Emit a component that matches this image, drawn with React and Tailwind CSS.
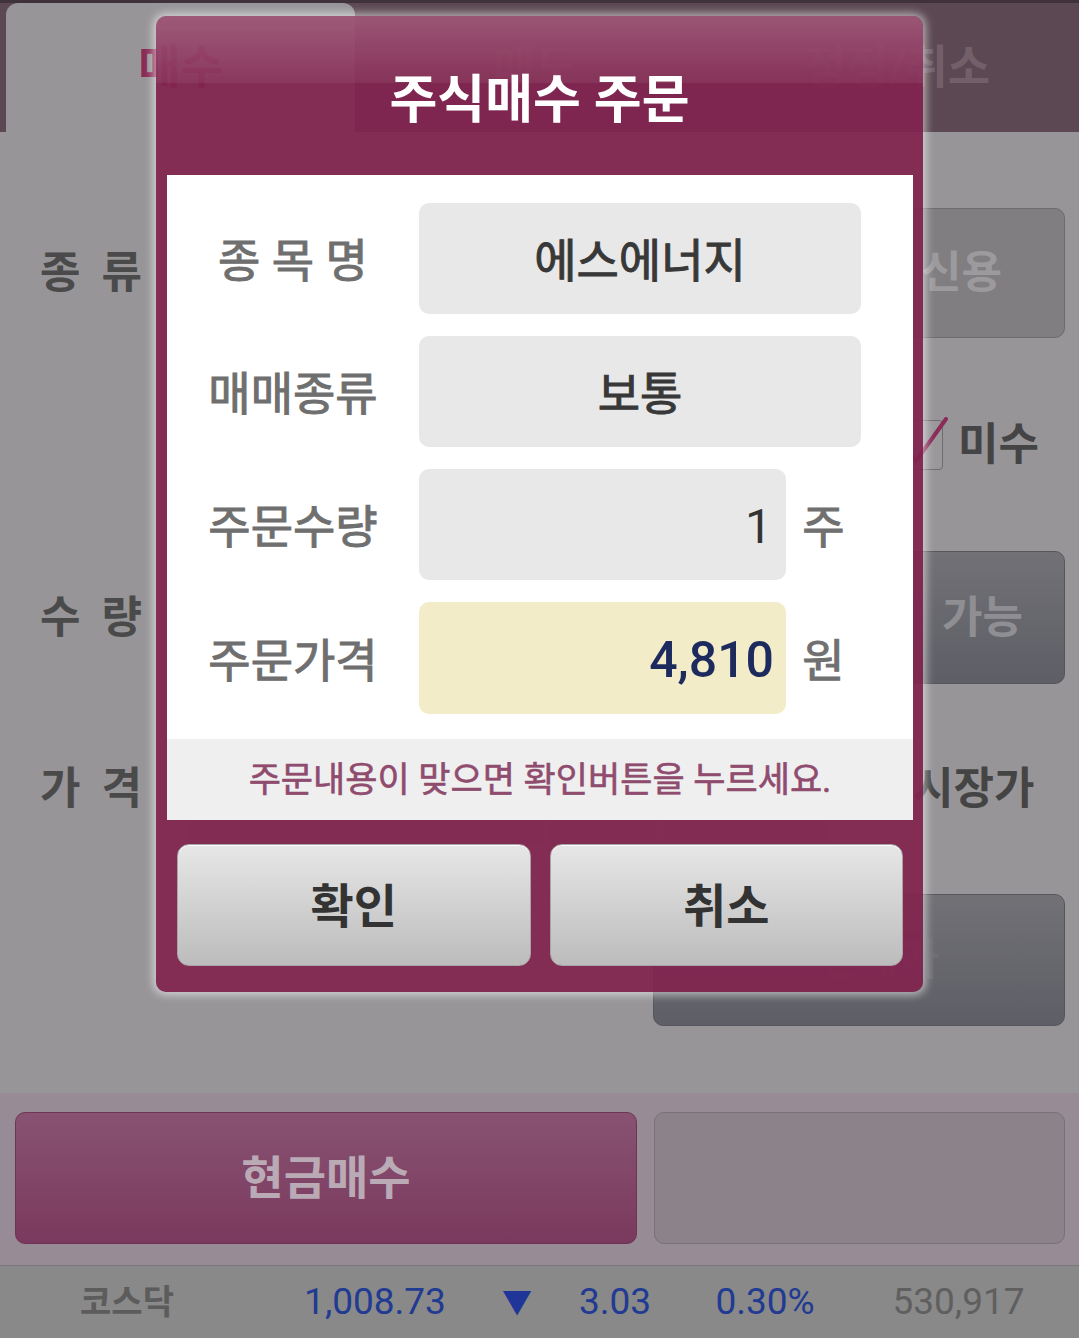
export default function App() {
  return (
    <div className="relative w-[1079px] h-[1338px] overflow-hidden bg-[#979598] font-['Roboto','Noto_Sans_CJK_KR',sans-serif]">
      {/* dimmed order screen behind the dialog */}
      <div className="flex flex-col h-full">
        {/* tabs */}
        <div className="h-[132px] flex items-end pl-[6px] bg-[#5b4852] border-t-[3px] border-[#40323a]">
          <div className="w-[349px] h-full rounded-t-[12px] bg-[#979598] flex items-center justify-center text-[46px] font-bold text-[#8a2b56]">매수</div>
          <div className="w-[360px] h-full flex items-center justify-center text-[46px] font-bold text-[#6e5b66]">매도</div>
          <div className="flex-1 h-full flex items-center justify-center text-[46px] font-bold text-[#725f6a]">정정/취소</div>
        </div>

        <div className="flex-1 flex flex-col">
          <div className="mt-[76px] h-[130px] flex items-center">
            <Label a="종" b="류" />
            <div className="flex-1" />
            <div className="w-[207px] h-full mr-[14px] rounded-[10px] border border-[#6d6b6f] bg-[#807e81] flex items-center justify-center text-[44px] font-bold text-[#9c9a9d]">신용</div>
          </div>

          <div className="h-[213px] flex items-center">
            <div className="flex-1" />
            <div className="w-[50px] h-[50px] rounded-[4px] border border-[#6e6c70] bg-[#9a989b] mr-[15px]">
              <svg width="56" height="56" viewBox="0 0 56 56" className="-mt-[4px]">
                <path d="M10 30 L22 44 L52 2" fill="none" stroke="#8a2b58" strokeWidth="4" strokeLinecap="round" />
              </svg>
            </div>
            <div className="w-[121px] text-[44px] font-bold text-[#444]">미수</div>
          </div>

          <div className="h-[133px] flex items-center">
            <Label a="수" b="량" />
            <div className="flex-1" />
            <div className="w-[165px] h-full mr-[14px] rounded-[10px] border border-[#56565c] bg-linear-to-b from-[#717176] to-[#5e5f66] flex items-center justify-center text-[44px] font-bold text-[#8f8e93]">가능</div>
          </div>

          <div className="h-[210px] flex items-center">
            <Label a="가" b="격" />
            <div className="flex-1 flex gap-[2px] pl-[40px] self-end mb-[48px]">
              <div className="w-[97px] h-[40px] bg-[#8f8d90]" />
              <div className="w-[255px] h-[40px] bg-[#8f8d90]" />
              <div className="w-[112px] h-[40px] bg-[#8f8d90]" />
              <div className="w-[166px] h-[40px] bg-[#8f8d90]" />
            </div>
            <div className="w-[166px] text-[44px] font-bold text-[#444]">시장가</div>
          </div>

          <div className="h-[132px] flex">
            <div className="flex-1" />
            <div className="w-[412px] h-full mr-[14px] rounded-[10px] border border-[#56565c] bg-linear-to-b from-[#717176] to-[#5e5f66] flex items-center justify-center text-[44px] font-bold text-[#6f6e74]">
              <span className="ml-[40px]">전체가</span>
            </div>
          </div>
          <div className="flex-1" />
        </div>

        {/* bottom action band */}
        <div className="h-[172px] bg-[#978c96] flex gap-[17px] pl-[15px] pr-[14px] pt-[19px] pb-[21px]">
          <div className="w-[622px] rounded-[10px] border border-[#6d3454] bg-linear-to-b from-[#885272] to-[#7a395e] flex items-center justify-center text-[46px] font-bold text-[#b9aab5]">현금매수</div>
          <div className="flex-1 rounded-[10px] border border-[#7a7078] bg-[#8c8289]" />
        </div>

        {/* index ticker */}
        <div className="h-[73px] border-t border-[#7c777b] bg-[#898989] grid grid-cols-[254px_242px_42px_154px_146px_1fr] items-center text-center">
          <div className="text-[34px] font-bold text-[#5c5c5c]">코스닥</div>
          <div className="text-[37px] text-[#213a92]">1,008.73</div>
          <div className="text-[30px] text-[#1f3597]">▼</div>
          <div className="text-[37px] text-[#213a92]">3.03</div>
          <div className="text-[37px] text-[#213a92]">0.30%</div>
          <div className="text-[37px] text-[#5f5f5f]">530,917</div>
        </div>
      </div>

      {/* order confirm dialog */}
      <div className="absolute left-[156px] top-[16px] w-[767px] h-[976px] rounded-[10px] bg-[rgba(129,35,79,0.93)] bg-[linear-gradient(to_bottom,rgba(255,255,255,0.22),rgba(255,255,255,0.06)_67px,transparent_67px)] shadow-[0_0_8px_3px_rgba(255,255,255,0.55)] flex flex-col">
        <div className="h-[159px] flex items-center justify-center pt-[10px] text-[52px] font-bold text-white">주식매수 주문</div>

        <div className="ml-[11px] mr-[10px] h-[645px] bg-white flex flex-col">
          <div className="flex-1 flex flex-col gap-[22px] pt-[28px]">
            <Row label="종 목 명">
              <div className="w-[442px] h-[111px] pt-[6px] rounded-[10px] bg-[#e8e8e8] flex items-center justify-center text-[46px] text-[#383838] [-webkit-text-stroke:1px_#383838]">에스에너지</div>
            </Row>
            <Row label="매매종류">
              <div className="w-[442px] h-[111px] pt-[6px] rounded-[10px] bg-[#e8e8e8] flex items-center justify-center text-[46px] text-[#383838] [-webkit-text-stroke:1px_#383838]">보통</div>
            </Row>
            <Row label="주문수량">
              <div className="w-[367px] h-[111px] pt-[4px] rounded-[10px] bg-[#e8e8e8] flex items-center justify-end pr-[14px] text-[48px] text-[#333]">1</div>
              <Unit>주</Unit>
            </Row>
            <Row label="주문가격">
              <div className="w-[367px] h-[112px] pt-[4px] rounded-[10px] bg-[#f3ecc9] flex items-center justify-end pr-[12px] text-[50px] font-medium text-[#1d2a5e]">4,810</div>
              <Unit>원</Unit>
            </Row>
          </div>
          <div className="h-[81px] pt-[4px] bg-[#efeff0] flex items-center justify-center text-[35px] text-[#8f4c6e] [-webkit-text-stroke:0.6px_#8f4c6e]">주문내용이 맞으면 확인버튼을 누르세요.</div>
        </div>

        <div className="mt-[24px] h-[122px] flex gap-[19px] pl-[21px] pr-[20px]">
          <button className="flex-1 pt-[4px] rounded-[12px] border border-[#a9a4a7] bg-linear-to-b from-[#e7e7e7] to-[#bcbcbc] shadow-[inset_0_1px_0_rgba(255,255,255,0.9)] text-[47px] font-bold text-[#333]">확인</button>
          <button className="flex-1 pt-[4px] rounded-[12px] border border-[#a9a4a7] bg-linear-to-b from-[#e7e7e7] to-[#bcbcbc] shadow-[inset_0_1px_0_rgba(255,255,255,0.9)] text-[47px] font-bold text-[#333]">취소</button>
        </div>
      </div>
    </div>
  );
}

function Label({ a, b }) {
  return (
    <div className="w-[150px] pl-[40px] flex gap-[21px] text-[44px] font-bold text-[#4a4a4a]">
      <span>{a}</span>
      <span>{b}</span>
    </div>
  );
}

function Row({ label, children }) {
  return (
    <div className="flex items-center">
      <div className="w-[252px] pt-[6px] text-center text-[46px] text-[#6f6f6f] [-webkit-text-stroke:1px_#6f6f6f]">{label}</div>
      {children}
    </div>
  );
}

function Unit({ children }) {
  return (
    <div className="w-[75px] pt-[6px] text-center text-[46px] text-[#707070] [-webkit-text-stroke:1px_#707070]">{children}</div>
  );
}
